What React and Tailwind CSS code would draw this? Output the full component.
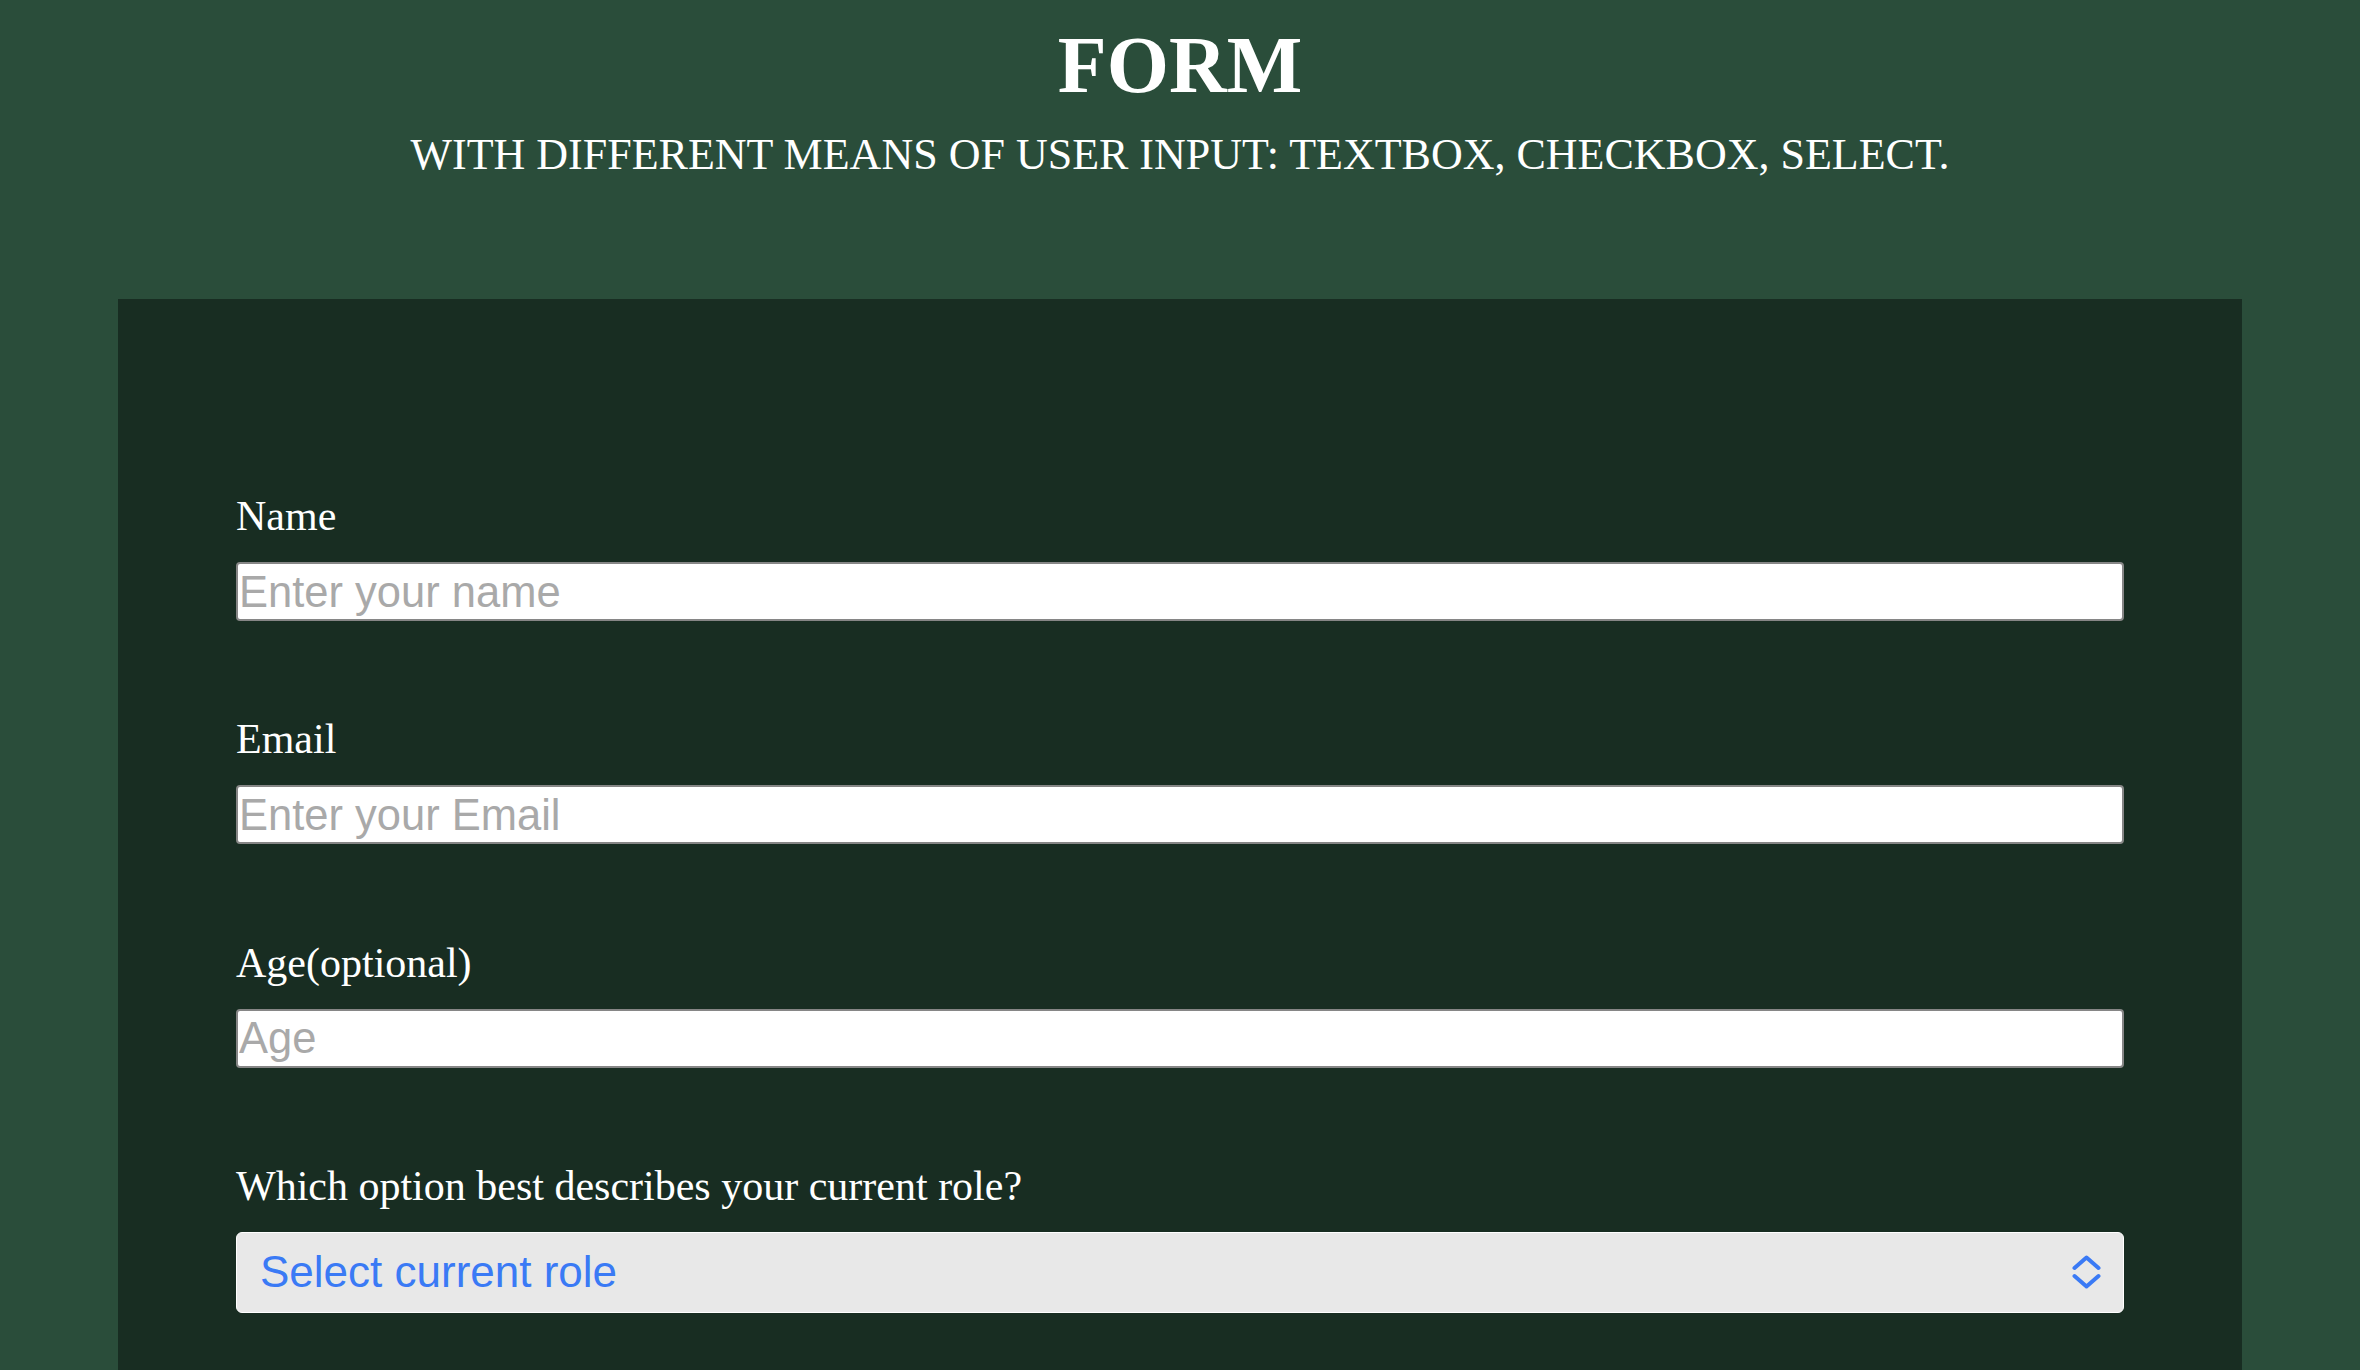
import React, { useState } from 'react';

const fields = [
  { id: 'name', label: 'Name', type: 'text', placeholder: 'Enter your name' },
  { id: 'email', label: 'Email', type: 'email', placeholder: 'Enter your Email' },
  { id: 'age', label: 'Age(optional)', type: 'number', placeholder: 'Age' },
];

const Chevrons = () => (
  <svg
    width="29"
    height="34"
    viewBox="0 0 29 34"
    fill="none"
    stroke="#3a7af5"
    strokeWidth="4"
    strokeLinecap="round"
    strokeLinejoin="round"
  >
    <path d="M2.5 13 L14.5 2.5 L26.5 13" />
    <path d="M2.5 21 L14.5 31.5 L26.5 21" />
  </svg>
);

const App = () => {
  const [values, setValues] = useState({ name: '', email: '', age: '', role: '' });

  const handleChange = (e) => {
    const { name, value } = e.target;
    setValues({ ...values, [name]: value });
  };

  return (
    <div className="min-h-screen bg-[#2a4d3a] font-['Liberation_Serif',serif] text-white">
      <header className="pt-[19px] text-center">
        <h1 className="text-[80px] leading-[92px] font-bold">FORM</h1>
        <p className="mt-[20px] text-[44px] leading-[48px]">
          WITH DIFFERENT MEANS OF USER INPUT: TEXTBOX, CHECKBOX, SELECT.
        </p>
      </header>

      <div className="mx-auto mt-[120px] w-[90%] bg-[#182d22] px-[118px] pt-[194px] pb-[57px]">
        <form className="flex flex-col gap-[95.3px]">
          {fields.map((f) => (
            <div key={f.id}>
              <label htmlFor={f.id} className="block text-[42px] leading-[47px] mb-[22px]">
                {f.label}
              </label>
              <input
                id={f.id}
                name={f.id}
                type={f.type}
                value={values[f.id]}
                onChange={handleChange}
                placeholder={f.placeholder}
                className="block w-full h-[59px] bg-white border-2 border-[#868686] rounded-[4px] pl-[1px] pt-[2px] font-['Liberation_Sans',Arial,sans-serif] text-[43.5px] text-black placeholder:text-[#a9a9a9] outline-none appearance-none"
              />
            </div>
          ))}

          <div>
            <label htmlFor="role" className="block text-[42px] leading-[47px] mb-[22px]">
              Which option best describes your current role?
            </label>
            <div className="relative">
              <select
                id="role"
                name="role"
                value={values.role}
                onChange={handleChange}
                className="block w-full h-[81px] appearance-none bg-[#e8e8e8] border-[1.5px] border-white rounded-[6px] pl-[23px] font-['Liberation_Sans',Arial,sans-serif] text-[44px] text-[#3a7af5] outline-none"
              >
                <option value="" disabled>
                  Select current role
                </option>
                <option value="student">Student</option>
                <option value="full-time">Full Time Job</option>
                <option value="learner">Full Time Learner</option>
                <option value="other">Other</option>
              </select>
              <div className="pointer-events-none absolute right-[23px] top-1/2 -translate-y-1/2 flex">
                <Chevrons />
              </div>
            </div>
          </div>
        </form>
      </div>
    </div>
  );
};

export default App;
